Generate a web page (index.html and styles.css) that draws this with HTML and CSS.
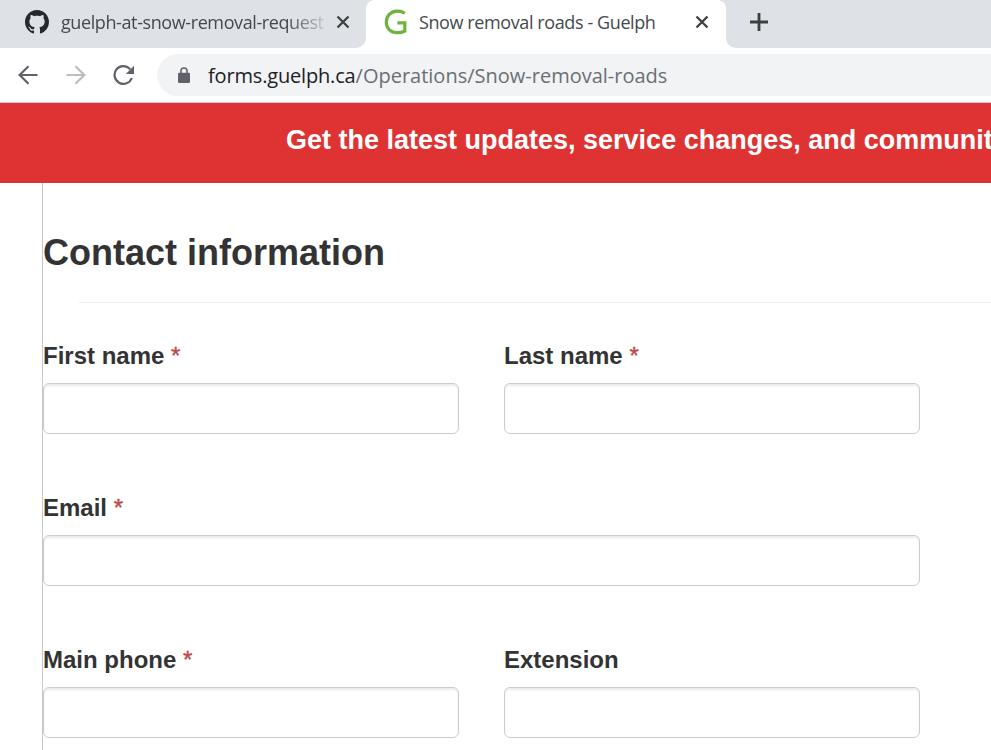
FILE: index.html
```html
<!DOCTYPE html>
<html lang="en">
<head>
<meta charset="utf-8">
<title>Snow removal roads - Guelph</title>
<link rel="stylesheet" href="styles.css">
</head>
<body>
<header class="browser">
  <div class="tabs">
    <div class="tab tab-back">
      <svg class="github" viewBox="0 0 16 16"><path d="M8 0C3.58 0 0 3.58 0 8c0 3.54 2.29 6.53 5.47 7.59.4.07.55-.17.55-.38 0-.19-.01-.82-.01-1.49-2.01.37-2.53-.49-2.69-.94-.09-.23-.48-.94-.82-1.13-.28-.15-.68-.52-.01-.53.63-.01 1.08.58 1.23.82.72 1.21 1.87.87 2.33.66.07-.52.28-.87.51-1.07-1.78-.2-3.64-.89-3.64-3.95 0-.87.31-1.59.82-2.15-.08-.2-.36-1.02.08-2.12 0 0 .67-.21 2.2.82.64-.18 1.32-.27 2-.27s1.36.09 2 .27c1.53-1.04 2.2-.82 2.2-.82.44 1.1.16 1.92.08 2.12.51.56.82 1.27.82 2.15 0 3.07-1.87 3.75-3.65 3.95.29.25.54.73.54 1.48 0 1.07-.01 1.93-.01 2.2 0 .21.15.46.55.38A8.01 8.01 0 0 0 16 8c0-4.42-3.58-8-8-8z"/></svg>
      <span class="tab-title faded">guelph-at-snow-removal-request</span>
      <svg class="close" viewBox="0 0 14 14"><path d="M1.5 1.5l11 11M12.500 1.5l-11 11"/></svg>
    </div>
    <div class="tab tab-front">
      <svg class="guelph" viewBox="0 0 24 26"><path d="M20.800 4.200C18.500 2.600 16.500 2.100 13.600 2.100C7 2.100 2.300 6.400 2.300 13.100C2.300 19.600 6.800 23.700 13.300 23.700C16.200 23.700 18.800 23.100 20.800 22V13.900H13.400"/></svg>
      <span class="tab-title">Snow removal roads - Guelph</span>
      <svg class="close" viewBox="0 0 14 14"><path d="M1.5 1.5l11 11M12.500 1.5l-11 11"/></svg>
    </div>
    <div class="tab-rest">
      <svg class="plus" viewBox="0 0 18 18"><path d="M9 0v18M0 9h18"/></svg>
    </div>
  </div>
  <div class="toolbar">
    <svg class="nav back" viewBox="0 0 20 20"><path d="M19.500 10H2M10.500 1.200L1.600 10l8.900 8.800"/></svg>
    <svg class="nav forward" viewBox="0 0 20 20"><path d="M.5 10H18M9.500 1.200l8.900 8.800-8.900 8.800"/></svg>
    <svg class="nav reload" viewBox="0 0 22 20"><path d="M18.800 13A8.900 8.900 0 1 1 17.200 4.200"/><path class="head" d="M21 .8v8.200h-8.200z"/></svg>
    <div class="address">
      <svg class="lock" viewBox="0 0 12 16"><path d="M1.300 5.700h.9V4.100a3.800 3.800 0 0 1 7.600 0v1.600h.9Q12 5.700 12 7v7.700Q12 16 10.700 16H1.300Q0 16 0 14.700V7Q0 5.700 1.300 5.700zM3.700 5.700h4.600V4.100a2.300 2.300 0 0 0-4.600 0z"/></svg>
      <span class="url"><span class="domain">forms.guelph.ca</span>/Operations/Snow-removal-roads</span>
    </div>
  </div>
</header>
<div class="banner">Get the latest updates, service changes, and communit</div>
<main class="form">
  <h1>Contact information</h1>
  <div class="rule"></div>
  <div class="fields">
    <label class="field">First name <b>*</b><input type="text"></label>
    <label class="field">Last name <b>*</b><input type="text"></label>
    <label class="field wide">Email <b>*</b><input type="text"></label>
    <label class="field">Main phone <b>*</b><input type="text"></label>
    <label class="field">Extension<input type="text"></label>
  </div>
</main>
</body>
</html>
```
FILE: styles.css
```css
* { box-sizing: border-box; }
body {
  margin: 0;
  height: 750px;
  overflow: hidden;
  display: flex;
  flex-direction: column;
  background: #fff;
  color: #333;
  font-family: "Liberation Sans", Arial, sans-serif;
}
svg { display: block; flex: none; fill: none; }
.browser {
  flex: none;
  height: 103px;
  border-bottom: 1px solid #c9cdd2;
  font-family: "Open Sans", "Noto Sans", sans-serif;
}
.tabs { display: flex; height: 48px; background: #fff; }
.tab { display: flex; align-items: center; height: 48px; padding-bottom: 4px; }
.tab-back {
  width: 366px;
  padding-left: 25px;
  background: #dee1e6;
  border-bottom-right-radius: 10px;
}
.tab-front { width: 360px; padding-left: 18px; position: relative; }
.tab-front::before, .tab-front::after {
  content: "";
  position: absolute;
  top: 0;
  width: 8px;
  height: 8px;
}
.tab-front::before { left: 0; background: radial-gradient(circle at 100% 100%, transparent 7.500px, #dee1e6 8px); }
.tab-front::after { right: 0; background: radial-gradient(circle at 0 100%, transparent 7.500px, #dee1e6 8px); }
.tab-rest {
  flex: 1;
  padding: 13px 0 0 23.500px;
  background: #dee1e6;
  border-bottom-left-radius: 10px;
}
.github { width: 24px; height: 24px; margin-right: 12px; }
.github path { fill: #24292e; }
.tab-title {
  width: 275.500px;
  overflow: hidden;
  white-space: nowrap;
  font-size: 18px;
  line-height: 28px;
  letter-spacing: -.4px;
  color: #45494d;
}
.faded {
  width: 264px;
  margin-right: 11px;
  -webkit-mask-image: linear-gradient(90deg, #000 226px, transparent 270px);
  mask-image: linear-gradient(90deg, #000 226px, transparent 270px);
}
.close { width: 14px; height: 14px; }
.close path { stroke: #3c4043; stroke-width: 2.300; }
.guelph { width: 24px; height: 26px; margin-right: 11px; }
.guelph path { stroke: #6cb33f; stroke-width: 3.200; }
.plus { width: 18px; height: 18px; }
.plus path { stroke: #3c4043; stroke-width: 2.800; }
.toolbar { display: flex; align-items: center; height: 54px; padding: 0 0 1px 18px; }
.nav { width: 20px; height: 20px; }
.nav path { stroke: #5f6368; stroke-width: 2.200; }
.back { margin-right: 28px; }
.forward { margin-right: 27px; }
.forward path { stroke: #bbbdbf; }
.reload { width: 22px; margin-right: 22px; }
.nav.reload .head { fill: #5f6368; stroke: none; }
.address {
  flex: 1;
  display: flex;
  align-items: center;
  height: 42px;
  margin-top: 1px;
  padding-left: 21px;
  background: #f1f3f4;
  border-radius: 21px 0 0 21px;
}
.lock { width: 12px; height: 16px; margin-right: 18px; }
.lock path { fill: #5f6368; fill-rule: evenodd; }
.url { padding-top: 2px; font-size: 20px; line-height: 30px; color: #6b6f73; white-space: nowrap; }
.domain { color: #202124; letter-spacing: -.17px; }
.banner {
  flex: none;
  height: 80px;
  padding-left: 286px;
  overflow: hidden;
  background: #df3333;
  color: #fff;
  font-size: 27px;
  font-weight: bold;
  line-height: 74px;
  white-space: nowrap;
}
.form { flex: 1; min-height: 0; margin-left: 42px; border-left: 1px solid #c8c8c8; }
h1 { margin: 0; padding-top: 50px; font-size: 36px; line-height: 40px; font-weight: bold; }
.rule { height: 1px; margin: 29px 0 39px 36px; background: #eee; }
.fields {
  display: grid;
  grid-template-columns: 416px 416px;
  column-gap: 45px;
  row-gap: 60px;
  width: 877px;
}
.field { display: block; font-size: 24px; line-height: 28px; font-weight: bold; }
.field b { color: #b94a48; font-weight: normal; -webkit-text-stroke: .4px #b94a48; }
.wide { grid-column: span 2; }
.field input {
  display: block;
  width: 100%;
  height: 51px;
  margin: 13px 0 0;
  border: 1px solid #ccc;
  border-radius: 6px;
  background: #fff;
  box-shadow: inset 0 2px 2px rgba(0, 0, 0, .075);
}
```
